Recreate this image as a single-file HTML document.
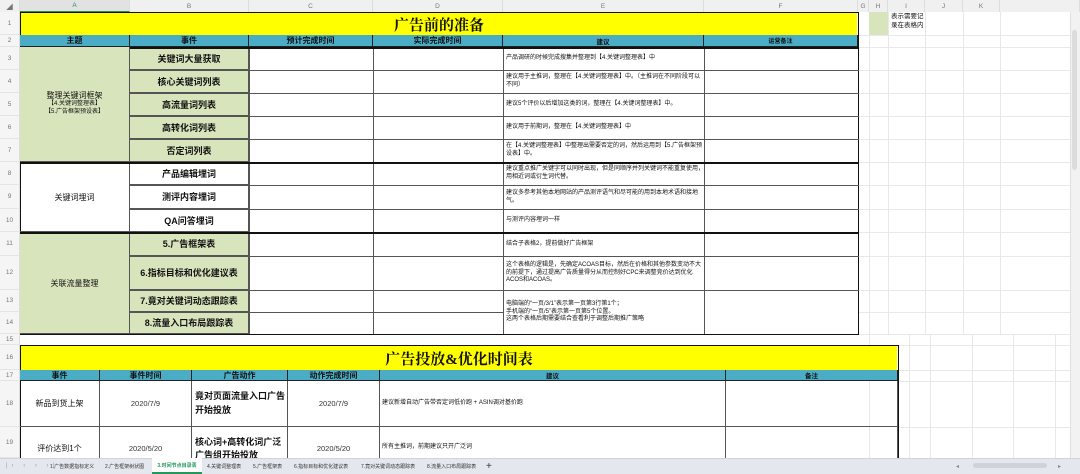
<!DOCTYPE html>
<html><head><meta charset="utf-8"><style>
*{margin:0;padding:0;box-sizing:border-box}
body{width:1080px;height:474px;overflow:hidden;background:#fff;font-family:"Liberation Sans","Noto Sans CJK SC",sans-serif;position:relative;color:#111}
.c{position:absolute;display:flex;align-items:center;justify-content:center;text-align:center;overflow:hidden;border-right:1px solid #555;border-bottom:1px solid #555}
.g{background:#d8e4bc}
.y{background:#ffff00;font-family:"Liberation Serif","Noto Serif CJK SC",serif;font-size:15px;font-weight:bold;border:none}
.h{background:#4bacc6;font-size:8px;font-weight:bold;border-color:#222}
.b{font-size:9px;font-weight:bold}
.t{font-size:6px;justify-content:flex-start;text-align:left;padding-left:2px;line-height:1.3}
.rh{position:absolute;left:0;width:20px;font-size:6.5px;color:#777;display:flex;align-items:center;justify-content:center;border-bottom:1px solid #e4e4e4;background:#f5f5f5;border-right:1px solid #ddd}
.ch{position:absolute;top:0;height:12px;font-size:6.5px;color:#777;display:flex;align-items:center;justify-content:center;background:#f0f0f0;border-right:1px solid #ddd}
.gl{position:absolute;background:#e8e8e8}
.tab{position:absolute;top:458px;height:16px;font-size:5px;color:#333;display:flex;align-items:center;white-space:nowrap}
</style></head><body>
<div class="gl" style="left:869px;top:12px;width:1px;height:446px"></div>
<div class="gl" style="left:888px;top:12px;width:1px;height:322px"></div>
<div class="gl" style="left:925px;top:12px;width:1px;height:322px"></div>
<div class="gl" style="left:963px;top:12px;width:1px;height:322px"></div>
<div class="gl" style="left:1000px;top:12px;width:1px;height:322px"></div>
<div class="gl" style="left:909px;top:334px;width:1px;height:124px"></div>
<div class="gl" style="left:930px;top:334px;width:1px;height:124px"></div>
<div class="gl" style="left:972px;top:334px;width:1px;height:124px"></div>
<div class="gl" style="left:1013px;top:334px;width:1px;height:124px"></div>
<div class="gl" style="left:1055px;top:334px;width:1px;height:124px"></div>
<div class="gl" style="left:858px;top:35px;width:212px;height:1px"></div>
<div class="gl" style="left:858px;top:47px;width:212px;height:1px"></div>
<div class="gl" style="left:858px;top:70px;width:212px;height:1px"></div>
<div class="gl" style="left:858px;top:93px;width:212px;height:1px"></div>
<div class="gl" style="left:858px;top:116px;width:212px;height:1px"></div>
<div class="gl" style="left:858px;top:139px;width:212px;height:1px"></div>
<div class="gl" style="left:858px;top:162px;width:212px;height:1px"></div>
<div class="gl" style="left:858px;top:185px;width:212px;height:1px"></div>
<div class="gl" style="left:858px;top:209px;width:212px;height:1px"></div>
<div class="gl" style="left:858px;top:232px;width:212px;height:1px"></div>
<div class="gl" style="left:858px;top:256px;width:212px;height:1px"></div>
<div class="gl" style="left:858px;top:290px;width:212px;height:1px"></div>
<div class="gl" style="left:858px;top:312px;width:212px;height:1px"></div>
<div class="gl" style="left:0;top:334px;width:1070px;height:1px"></div>
<div class="gl" style="left:898px;top:345px;width:172px;height:1px"></div>
<div class="gl" style="left:898px;top:370px;width:172px;height:1px"></div>
<div class="gl" style="left:898px;top:381px;width:172px;height:1px"></div>
<div class="gl" style="left:898px;top:427px;width:172px;height:1px"></div>
<div style="position:absolute;left:869px;top:12px;width:19px;height:23px;background:#d8e4bc"></div>
<div style="position:absolute;left:891px;top:13px;font-size:6.5px;line-height:1.35">表示需要记<br>录在表格内</div>
<div style="position:absolute;left:1070px;top:12px;width:10px;height:446px;background:#f2f2f2;border-left:1px solid #e0e0e0"></div>
<div style="position:absolute;left:1072px;top:30px;width:5px;height:140px;background:#dcdcdc;border-radius:3px"></div>

<div class="ch" style="left:0;width:20px">◢</div>
<div class="ch" style="left:20px;width:110px;background:#e2e2e2;color:#2a8a5a;border-bottom:1px solid #2a8a5a">A</div>
<div class="ch" style="left:130px;width:119px">B</div>
<div class="ch" style="left:249px;width:124px">C</div>
<div class="ch" style="left:373px;width:130px">D</div>
<div class="ch" style="left:503px;width:201px">E</div>
<div class="ch" style="left:704px;width:154px">F</div>
<div class="ch" style="left:858px;width:11px">G</div>
<div class="ch" style="left:869px;width:19px">H</div>
<div class="ch" style="left:888px;width:37px">I</div>
<div class="ch" style="left:925px;width:38px">J</div>
<div class="ch" style="left:963px;width:37px">K</div>
<div class="ch" style="left:1000px;width:80px"></div>

<div class="rh" style="top:12px;height:23px">1</div>
<div class="rh" style="top:35px;height:12px">2</div>
<div class="rh" style="top:47px;height:23px">3</div>
<div class="rh" style="top:70px;height:23px">4</div>
<div class="rh" style="top:93px;height:23px">5</div>
<div class="rh" style="top:116px;height:23px">6</div>
<div class="rh" style="top:139px;height:23px">7</div>
<div class="rh" style="top:162px;height:23px">8</div>
<div class="rh" style="top:185px;height:24px">9</div>
<div class="rh" style="top:209px;height:23px">10</div>
<div class="rh" style="top:232px;height:24px">11</div>
<div class="rh" style="top:256px;height:34px">12</div>
<div class="rh" style="top:290px;height:22px">13</div>
<div class="rh" style="top:312px;height:22px">14</div>
<div class="rh" style="top:334px;height:11px">15</div>
<div class="rh" style="top:345px;height:25px">16</div>
<div class="rh" style="top:370px;height:11px">17</div>
<div class="rh" style="top:381px;height:46px">18</div>
<div class="rh" style="top:427px;height:31px">19</div>

<div style="position:absolute;left:20px;top:12px;width:839px;height:323px;border:1.5px solid #111"></div>
<div class="c y" style="left:21px;top:13px;width:836px;height:22px">广告前的准备</div>
<div class="c h" style="left:20px;top:35px;width:110px;height:12px">主题</div>
<div class="c h" style="left:130px;top:35px;width:119px;height:12px">事件</div>
<div class="c h" style="left:249px;top:35px;width:124px;height:12px">预计完成时间</div>
<div class="c h" style="left:373px;top:35px;width:130px;height:12px">实际完成时间</div>
<div class="c h" style="left:503px;top:35px;width:201px;height:12px;font-size:6.5px">建议</div>
<div class="c h" style="left:704px;top:35px;width:154px;height:12px;font-size:6px">运营备注</div>

<div class="c g" style="left:20px;top:47px;width:110px;height:115px;font-size:8px;flex-direction:column;line-height:1.3">整理关键词框架<span style="font-size:6px">【4.关键词整理表】</span><span style="font-size:6px">【5.广告框架预设表】</span></div>
<div class="c" style="left:20px;top:162px;width:110px;height:70px;font-size:8px;border-top:1.5px solid #111">关键词埋词</div>
<div class="c g" style="left:20px;top:232px;width:110px;height:102px;font-size:8px;border-top:1.5px solid #111">关联流量整理</div>

<div class="c g b" style="left:130px;top:47px;width:119px;height:23px">关键词大量获取</div>
<div class="c g b" style="left:130px;top:70px;width:119px;height:23px">核心关键词列表</div>
<div class="c g b" style="left:130px;top:93px;width:119px;height:23px">高流量词列表</div>
<div class="c g b" style="left:130px;top:116px;width:119px;height:23px">高转化词列表</div>
<div class="c g b" style="left:130px;top:139px;width:119px;height:23px">否定词列表</div>
<div class="c b" style="left:130px;top:162px;width:119px;height:23px">产品编辑埋词</div>
<div class="c b" style="left:130px;top:185px;width:119px;height:24px">测评内容埋词</div>
<div class="c b" style="left:130px;top:209px;width:119px;height:23px">QA问答埋词</div>
<div class="c g b" style="left:130px;top:232px;width:119px;height:24px">5.广告框架表</div>
<div class="c g b" style="left:130px;top:256px;width:119px;height:34px">6.指标目标和优化建议表</div>
<div class="c g b" style="left:130px;top:290px;width:119px;height:22px">7.竟对关键词动态跟踪表</div>
<div class="c g b" style="left:130px;top:312px;width:119px;height:22px">8.流量入口布局跟踪表</div>

<div style="position:absolute;left:249px;top:47px;width:1px;height:287px;background:#555"></div>
<div style="position:absolute;left:373px;top:47px;width:1px;height:287px;background:#555"></div>
<div style="position:absolute;left:503px;top:47px;width:1px;height:287px;background:#555"></div>
<div style="position:absolute;left:704px;top:47px;width:1px;height:287px;background:#555"></div>
<div style="position:absolute;left:130px;top:47px;width:729px;height:1.5px;background:#111"></div>
<div style="position:absolute;left:130px;top:70px;width:729px;height:1px;background:#555"></div>
<div style="position:absolute;left:130px;top:93px;width:729px;height:1px;background:#555"></div>
<div style="position:absolute;left:130px;top:116px;width:729px;height:1px;background:#555"></div>
<div style="position:absolute;left:130px;top:139px;width:729px;height:1px;background:#555"></div>
<div style="position:absolute;left:20px;top:162px;width:839px;height:1.5px;background:#111"></div>
<div style="position:absolute;left:130px;top:185px;width:729px;height:1px;background:#555"></div>
<div style="position:absolute;left:130px;top:209px;width:729px;height:1px;background:#555"></div>
<div style="position:absolute;left:20px;top:232px;width:839px;height:1.5px;background:#111"></div>
<div style="position:absolute;left:130px;top:256px;width:374px;height:1px;background:#555"></div>
<div style="position:absolute;left:130px;top:290px;width:374px;height:1px;background:#555"></div>
<div style="position:absolute;left:130px;top:312px;width:374px;height:1px;background:#555"></div>
<div style="position:absolute;left:503px;top:256px;width:356px;height:1px;background:#555"></div>
<div style="position:absolute;left:503px;top:290px;width:356px;height:1px;background:#555"></div>

<div class="c t" style="left:504px;top:48px;width:200px;height:22px;border:none">产品调研的时候完成搜集并整理到【4.关键词整理表】中</div>
<div class="c t" style="left:504px;top:71px;width:200px;height:22px;border:none">建议用于主推词，整理在【4.关键词整理表】中。（主推词在不同阶段可以不同）</div>
<div class="c t" style="left:504px;top:94px;width:200px;height:22px;border:none">建议5个评价以后增加这类的词，整理在【4.关键词整理表】中。</div>
<div class="c t" style="left:504px;top:117px;width:200px;height:22px;border:none">建议用于前期词，整理在【4.关键词整理表】中</div>
<div class="c t" style="left:504px;top:140px;width:200px;height:22px;border:none">在【4.关键词整理表】中整理出需要否定的词，然后运用到【5.广告框架预设表】中。</div>
<div class="c t" style="left:504px;top:163px;width:200px;height:22px;border:none">建议重点推广关键字可以同时出现，但是同顺序并列关键词不能重复使用，用相近词或衍生词代替。</div>
<div class="c t" style="left:504px;top:186px;width:200px;height:23px;border:none">建议多参考其他本地网站的产品测评语气和尽可能的用到本地术语和接地气。</div>
<div class="c t" style="left:504px;top:210px;width:200px;height:22px;border:none">与测评内容埋词一样</div>
<div class="c t" style="left:504px;top:233px;width:200px;height:23px;border:none">结合子表格2，提前做好广告框架</div>
<div class="c t" style="left:504px;top:257px;width:200px;height:33px;border:none">这个表格的逻辑是，先确定ACOAS目标，然后在价格和其他参数变动不大的前提下，通过提高广告质量得分从而控制好CPC来调整竞价达到优化ACOS和ACOAS。</div>
<div class="c t" style="left:504px;top:291px;width:200px;height:43px;border:none">电脑端的“一页/3/1”表示第一页第3行第1个；<br>手机端的“一页/5”表示第一页第5个位置。<br>这两个表格后期需要结合查看利于调整后期推广策略</div>

<div style="position:absolute;left:20px;top:345px;width:879px;height:115px;border:1.5px solid #111;border-bottom:none"></div>
<div class="c y" style="left:21px;top:346px;width:876px;height:24px">广告投放&amp;优化时间表</div>
<div class="c h" style="left:20px;top:370px;width:80px;height:11px">事件</div>
<div class="c h" style="left:100px;top:370px;width:92px;height:11px">事件时间</div>
<div class="c h" style="left:192px;top:370px;width:96px;height:11px">广告动作</div>
<div class="c h" style="left:288px;top:370px;width:92px;height:11px">动作完成时间</div>
<div class="c h" style="left:380px;top:370px;width:346px;height:11px;font-size:6.5px">建议</div>
<div class="c h" style="left:726px;top:370px;width:172px;height:11px;font-size:6.5px">备注</div>

<div class="c" style="left:20px;top:381px;width:80px;height:46px;font-size:8px">新品到货上架</div>
<div class="c" style="left:100px;top:381px;width:92px;height:46px;font-size:7.5px;color:#333">2020/7/9</div>
<div class="c b" style="left:192px;top:381px;width:96px;height:46px;justify-content:flex-start;text-align:left;padding-left:3px;line-height:1.45">竟对页面流量入口广告开始投放</div>
<div class="c" style="left:288px;top:381px;width:92px;height:46px;font-size:7.5px;color:#333">2020/7/9</div>
<div class="c t" style="left:380px;top:381px;width:346px;height:46px">建议新增自动广告带否定词低价跑 + ASIN调对基价跑</div>
<div class="c" style="left:726px;top:381px;width:172px;height:46px"></div>

<div class="c" style="left:20px;top:427px;width:80px;height:33px;font-size:8px;padding-top:10px">评价达到1个</div>
<div class="c" style="left:100px;top:427px;width:92px;height:33px;font-size:7.5px;color:#333;padding-top:10px">2020/5/20</div>
<div class="c b" style="left:192px;top:427px;width:96px;height:33px;justify-content:flex-start;align-items:flex-start;text-align:left;padding:9px 0 0 3px;line-height:1.45">核心词+高转化词广泛广告组开始投放</div>
<div class="c" style="left:288px;top:427px;width:92px;height:33px;font-size:7.5px;color:#333;padding-top:10px">2020/5/20</div>
<div class="c t" style="left:380px;top:427px;width:346px;height:33px;padding-top:10px">所有主推词，前期建议只开广泛词</div>
<div class="c" style="left:726px;top:427px;width:172px;height:33px"></div>

<div style="position:absolute;left:0;top:458px;width:1080px;height:16px;background:#e4e8ee;border-top:1px solid #d0d4da"></div>
<div class="tab" style="left:6px;color:#999;letter-spacing:4px;font-size:6px">|‹ ‹ › ›|</div>
<div class="tab" style="left:50px">1.广告数据指标定义</div>
<div class="tab" style="left:105px">2.广告框架树状图</div>
<div class="tab" style="left:152px;width:50px;background:#fff;color:#1e9a5a;font-weight:bold;justify-content:center;border-bottom:2px solid #1e9a5a">3.时间节点目录表</div>
<div class="tab" style="left:207px">4.关键词整理表</div>
<div class="tab" style="left:253px">5.广告框架表</div>
<div class="tab" style="left:294px">6.指标目标和优化建议表</div>
<div class="tab" style="left:361px">7.竟对关键词动态跟踪表</div>
<div class="tab" style="left:427px">8.流量入口布局跟踪表</div>
<div class="tab" style="left:486px;font-size:10px">+</div>
<div class="tab" style="left:956px;color:#888;font-size:6px">◂</div>
<div style="position:absolute;left:973px;top:463px;width:74px;height:5px;background:#cfd3d9;border-radius:3px"></div>
<div class="tab" style="left:1058px;color:#888;font-size:6px">▸</div>
</body></html>
